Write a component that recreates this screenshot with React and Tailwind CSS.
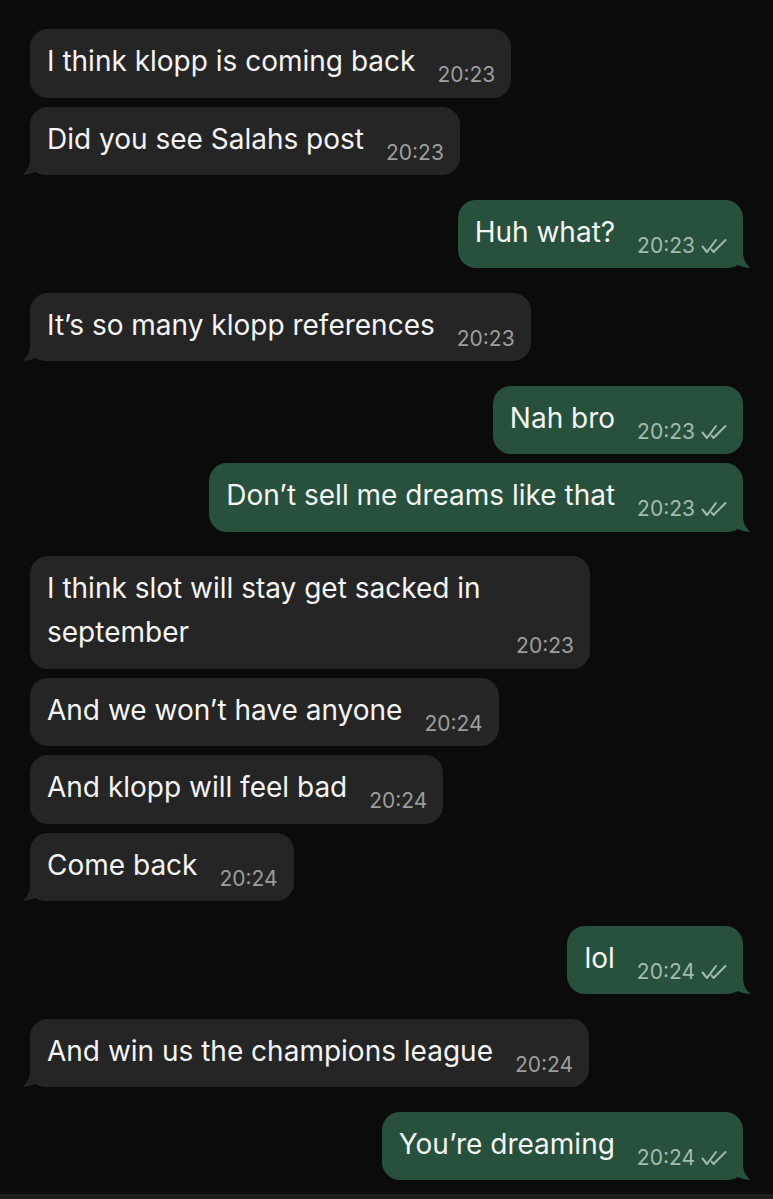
import React from 'react'

const groups = [
  {
    side: 'in',
    items: [
      { text: 'I think klopp is coming back', time: '20:23' },
      { text: 'Did you see Salahs post', time: '20:23' },
    ],
  },
  { side: 'out', items: [{ text: 'Huh what?', time: '20:23' }] },
  { side: 'in', items: [{ text: 'It’s so many klopp references', time: '20:23' }] },
  {
    side: 'out',
    items: [
      { text: 'Nah bro', time: '20:23' },
      { text: 'Don’t sell me dreams like that', time: '20:23' },
    ],
  },
  {
    side: 'in',
    items: [
      { text: 'I think slot will stay get sacked in september', time: '20:23' },
      { text: 'And we won’t have anyone', time: '20:24' },
      { text: 'And klopp will feel bad', time: '20:24' },
      { text: 'Come back', time: '20:24' },
    ],
  },
  { side: 'out', items: [{ text: 'lol', time: '20:24' }] },
  { side: 'in', items: [{ text: 'And win us the champions league', time: '20:24' }] },
  { side: 'out', items: [{ text: 'You’re dreaming', time: '20:24' }] },
]

// double tick, read state
const ReadTicks = () => (
  <svg width="26" height="16" viewBox="0 0 26 16" fill="none" stroke="currentColor" strokeWidth="2" strokeLinecap="round" strokeLinejoin="round">
    <path d="M1.5 8.5 L6 14 L15 2" />
    <path d="M10.5 11.5 L12.5 14 L24.5 2" />
  </svg>
)

const Tail = ({ out }) => (
  <svg
    width="34"
    height="26"
    viewBox="0 0 34 26"
    className={
      out
        ? 'absolute bottom-0 right-[-12px] scale-x-[-1]'
        : 'absolute bottom-0 left-[-12px]'
    }
  >
    <path
      d="M12 2 L12 9 C12 16 10 22 4 25.6 C9 26 13 25 17 23 C21 25.5 26 26 34 26 L34 2 Z"
      fill={out ? '#27503d' : '#252525'}
    />
  </svg>
)

const Bubble = ({ text, time, out, tail }) => (
  <div
    className={`relative flex max-w-[560px] items-end gap-[22px] rounded-[18px] pl-[17px] pr-[16px] pt-[10px] pb-[14.5px] ${
      out ? 'bg-[#27503d]' : 'bg-[#252525]'
    }`}
  >
    {tail && <Tail out={out} />}
    <p className="relative text-[28px] leading-[44px] text-[#f5f5f5]">{text}</p>
    <span
      className={`relative mb-[-4px] flex shrink-0 items-center gap-[6px] whitespace-nowrap text-[21px] leading-[24px] ${
        out ? 'text-[#a4bcaf]' : 'text-[#9d9d9d]'
      }`}
    >
      {time}
      {out && <ReadTicks />}
    </span>
  </div>
)

export default function App() {
  return (
    <div
      className="flex h-[1199px] w-full flex-col bg-[#0b0b0b]"
      style={{ fontFamily: 'Inter, "Noto Sans", sans-serif' }}
    >
      <div className="flex flex-col gap-[24.5px] px-[30px] pt-[29px]">
        {groups.map((g, gi) => (
          <div
            key={gi}
            className={`flex flex-col gap-[9px] ${g.side === 'out' ? 'items-end' : 'items-start'}`}
          >
            {g.items.map((m, i) => (
              <Bubble
                key={i}
                text={m.text}
                time={m.time}
                out={g.side === 'out'}
                tail={i === g.items.length - 1}
              />
            ))}
          </div>
        ))}
      </div>
      <div className="mt-auto h-[5px] bg-[#1e1e1e]" />
    </div>
  )
}
